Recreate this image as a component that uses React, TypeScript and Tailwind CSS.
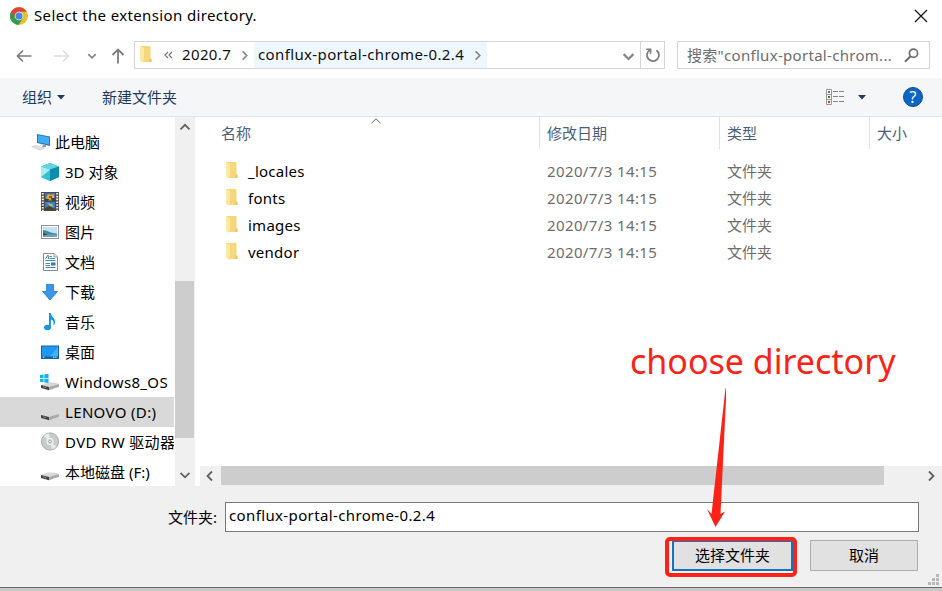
import type { ReactNode } from 'react';

type Place = { label: string; icon: ReactNode; root?: boolean; selected?: boolean; latin?: boolean };

function ChromeLogo() {
  return (
    <svg width="18" height="18" viewBox="0 0 18 18">
      <circle cx="9" cy="9" r="9" fill="#e9c02c" />
      <path d="M9 9 L1.2 4.5 A9 9 0 0 0 8.5 18 L12.9 11.2Z" fill="#2e9b52" />
      <path d="M9 9 L5.1 11.2 L1.2 4.5 A9 9 0 0 1 16.8 4.8 H9Z" fill="#d8473a" />
      <circle cx="9" cy="9" r="4.3" fill="#e8eef6" />
      <circle cx="9" cy="9" r="3.5" fill="#4a86dc" />
    </svg>
  );
}

function FolderIcon() {
  return (
    <svg width="13" height="18" viewBox="0 0 13 18" className="shrink-0">
      <path d="M1 0H11.5V12L12.5 13V16H4Z" fill="#f7d77c" />
      <path d="M11.5 12.5L12.5 13V16H10V13Z" fill="#f2c75f" />
      <path d="M1 0L5 2V13L3.5 17L1 15Z" fill="#fce9a6" />
    </svg>
  );
}

function Chevron({ d, width = 12, color = '#606060', stroke = 1.8 }: { d: string; width?: number; color?: string; stroke?: number }) {
  return (
    <svg width={width} height={width} viewBox="0 0 12 12" fill="none" stroke={color} strokeWidth={stroke} className="shrink-0">
      <path d={d} />
    </svg>
  );
}

const DOWN = 'M1.5 3.8L6 8.3L10.5 3.8';
const UP = 'M1.5 8.3L6 3.8L10.5 8.3';
const LEFT = 'M8 1.5L3.5 6L8 10.5';
const RIGHT = 'M4 1.5L8.5 6L4 10.5';

function Drive({ windows = false }: { windows?: boolean }) {
  return (
    <svg width="20" height="20" viewBox="0 0 20 20">
      <path d="M1 13L8 10.5H14L19 12L9 15.5Z" fill="#d8d8d8" />
      <path d="M1 13L9 15V18.3L1 16Z" fill="#444" />
      <path d="M9 15L19 12V14.8L9 18.3Z" fill="#aaa" />
      <path d="M3 14.8L6 15.6" stroke="#8a8a8a" />
      {windows && (
        <path d="M0 3L3.5 2.5V6H0ZM4.3 2.4L8.5 1.8V6H4.3ZM0 6.8H3.5V10.3L0 9.8ZM4.3 6.8H8.5V11L4.3 10.4Z" fill="#12b2e6" />
      )}
    </svg>
  );
}

const places: Place[] = [
  {
    label: '此电脑',
    root: true,
    icon: (
      <svg width="20" height="20" viewBox="0 0 20 20">
        <path d="M6 2L19 4.5V14L6 11Z" fill="#1c7fc4" />
        <path d="M7 3.2L18 5.3V12.6L7 10.1Z" fill="#42aef0" />
        <path d="M12 12.5L15 13.2V15L11 15.5Z" fill="#9a9a9a" />
        <path d="M0 14.5L5 13L14 16.5L9 18.5Z" fill="#c9cdd0" />
        <path d="M2 14.6L11 17.6M4 13.9L12.5 17" stroke="#f1f1f1" strokeWidth=".7" />
      </svg>
    ),
  },
  {
    label: '3D 对象',
    icon: (
      <svg width="20" height="20" viewBox="0 0 20 20">
        <path d="M10 1L19 4.5V15L10 19L1 15V4.5Z" fill="#18a8c4" />
        <path d="M1 4.5L10 1L19 4.5L10 7.5Z" fill="#62d3e2" />
        <path d="M1 4.5L10 7.5V19L1 15Z" fill="#a9ecf2" />
        <path d="M1 15L10 8V19Z" fill="#39bfd2" />
        <path d="M10 7.5L19 4.5V15L10 19Z" fill="#0d8dac" />
      </svg>
    ),
  },
  {
    label: '视频',
    icon: (
      <svg width="20" height="20" viewBox="0 0 20 20">
        <rect x="1" y="0" width="18" height="19" fill="#4a4a4a" />
        <path d="M2.8 1V19M17.2 1V19" stroke="#f1f1f1" strokeWidth="2" strokeDasharray="1.6 1.2" />
        <rect x="5" y="1" width="10" height="8" fill="#4f6fb0" />
        <rect x="5" y="10" width="10" height="8" fill="#3e7bd0" />
        <path d="M6 6L8 2L11 3L14 2V6L10 8Z" fill="#d9b238" />
        <path d="M5 7H9L8 9H5ZM11 6H15V9H12ZM5 16L9 14L15 17V18H5Z" fill="#4a4425" />
        <path d="M7 11L12 12L14 15L10 14Z" fill="#b9bc62" />
        <path d="M9 4H12V6H9Z" fill="#b84630" />
      </svg>
    ),
  },
  {
    label: '图片',
    icon: (
      <svg width="20" height="20" viewBox="0 0 20 20">
        <rect x="1.5" y="3.5" width="17" height="13" fill="#fff" stroke="#8e979e" />
        <rect x="3" y="5" width="14" height="10" fill="#c4e2f7" />
        <path d="M3 8C7 8 9 11 17 11.5V13H3Z" fill="#4b8b8e" />
        <path d="M3 12.5H17V15H3Z" fill="#6fa0cc" />
        <path d="M3 11L8 12.5L3 13.5Z" fill="#294f58" />
      </svg>
    ),
  },
  {
    label: '文档',
    icon: (
      <svg width="20" height="20" viewBox="0 0 20 20">
        <path d="M3.5 1.5H14L17.5 5V18.5H3.5Z" fill="#fff" stroke="#858d91" />
        <path d="M14 1.5V5H17.5" fill="#e4e8ea" stroke="#858d91" strokeWidth=".8" />
        <path d="M5.5 7L8 3L8.7 7M9.5 4.5H12M9.5 6.5H15M5.5 8.5H15.5M5.5 13.5H10M5.5 15.5H15.5" stroke="#4089b8" fill="none" />
        <path d="M5.5 11.5H10" stroke="#4089b8" />
        <rect x="11" y="10.5" width="4.5" height="3" fill="#487894" />
      </svg>
    ),
  },
  {
    label: '下载',
    icon: (
      <svg width="20" height="20" viewBox="0 0 20 20">
        <path d="M6.5 2.5H13.5V9.5H17.5L10 18L2.5 9.5H6.5Z" fill="#3a97ea" stroke="#1e77c4" strokeWidth=".8" />
      </svg>
    ),
  },
  {
    label: '音乐',
    icon: (
      <svg width="20" height="20" viewBox="0 0 20 20" fill="#1495e6">
        <ellipse cx="7.5" cy="15.5" rx="3.4" ry="2.7" />
        <path d="M9 1H10.8C11 5 15.4 5.5 15 10.5C14.8 12 14 13 13.2 13.6C14.4 9.8 12.8 8 10.9 7.6V15.5H9Z" />
      </svg>
    ),
  },
  {
    label: '桌面',
    icon: (
      <svg width="20" height="20" viewBox="0 0 20 20">
        <rect x="1.5" y="4" width="17" height="12.5" fill="#1e98f2" stroke="#11669f" />
        <path d="M10 14.5L18 5V14.5Z" fill="#45b0fa" />
        <path d="M2 15.2H18" stroke="#0f5f9e" strokeWidth="1.4" />
        <path d="M3 15.2H4.5M13 15.2H17" stroke="#fff" strokeWidth=".9" strokeDasharray="1.4 .8" />
      </svg>
    ),
  },
  { label: 'Windows8_OS', icon: <Drive windows />, latin: true },
  { label: 'LENOVO (D:)', icon: <Drive />, selected: true, latin: true },
  {
    label: 'DVD RW 驱动器',
    latin: true,
    icon: (
      <svg width="20" height="20" viewBox="0 0 20 20">
        <circle cx="10" cy="9.5" r="8.6" fill="#c8cccc" stroke="#9c9c9c" strokeWidth=".8" />
        <path d="M10 9.5L3.8 4A8.3 8.3 0 0 1 9 1.3ZM10 9.5L16.5 14.5A8.3 8.3 0 0 1 12 17.4Z" fill="#e9ebeb" />
        <circle cx="10" cy="9.5" r="3.2" fill="#dcdfdf" stroke="#f7f7f7" />
        <circle cx="10" cy="9.5" r="1.3" fill="#fff" stroke="#8f9494" strokeWidth=".8" />
      </svg>
    ),
  },
  { label: '本地磁盘 (F:)', icon: <Drive /> },
];

const folders = ['_locales', 'fonts', 'images', 'vendor'];

function TitleBar() {
  return (
    <div className="flex h-[31px] items-center pl-[10px] pr-[14px]">
      <ChromeLogo />
      <span className="ml-[6px] text-[15px] tracking-[0.37px] text-black">Select the extension directory.</span>
      <svg width="14" height="14" viewBox="0 0 14 14" stroke="#111" strokeWidth="1.2" className="ml-auto">
        <path d="M1 1L13 13M13 1L1 13" />
      </svg>
    </div>
  );
}

function AddressBar() {
  return (
    <div className="flex h-[47px] items-start pt-[10px]">
      <div className="flex h-[29px] w-[134px] shrink-0 items-center pl-[16px]">
        <svg width="16" height="14" viewBox="0 0 16 14" fill="none" stroke="#7c7c7c" strokeWidth="1.7">
          <path d="M15.5 7H1.5M7 1.5L1.5 7L7 12.5" />
        </svg>
        <svg width="16" height="14" viewBox="0 0 16 14" fill="none" stroke="#dedede" strokeWidth="1.6" className="ml-[22px]">
          <path d="M0 7H14M9 1.5L14.5 7L9 12.5" />
        </svg>
        <span className="ml-[17px]">
          <Chevron d={DOWN} width={10} color="#858585" stroke={2} />
        </span>
        <svg width="14" height="16" viewBox="0 0 14 16" fill="none" stroke="#7c7c7c" strokeWidth="1.8" className="ml-[14px]">
          <path d="M7 15.5V1.5M1.5 7L7 1.5L12.5 7" />
        </svg>
      </div>
      <div className="flex h-[28px] w-[531px] shrink-0 items-center border border-[#d5d5d5] pl-[4px]">
        <FolderIcon />
        <svg width="9" height="8" viewBox="0 0 9 8" fill="none" stroke="#777" strokeWidth="1.2" className="ml-[12px]">
          <path d="M4 1L1 4L4 7M8 1L5 4L8 7" />
        </svg>
        <span className="ml-[9px] w-[50px] whitespace-nowrap pb-[2px] text-[15px] tracking-[0.37px] text-[#111]">2020.7</span>
        <span className="ml-[7px] w-[15px]">
          <Chevron d={RIGHT} width={11} color="#858585" />
        </span>
        <div className="flex h-full w-[233px] items-center bg-[#eff7fe] pl-[4px]">
          <span className="w-[208px] whitespace-nowrap pb-[2px] text-[15px] tracking-[0.37px] text-[#111]">conflux-portal-chrome-0.2.4</span>
          <span className="ml-[6px]">
            <Chevron d={RIGHT} width={11} color="#858585" />
          </span>
        </div>
        <span className="ml-auto mr-[5px] mt-[2px]">
          <Chevron d={DOWN} width={13} color="#858585" stroke={2} />
        </span>
        <div className="flex h-full w-[24px] items-center justify-center border-l border-[#d5d5d5]">
          <svg width="16" height="16" viewBox="0 0 16 16" fill="none" stroke="#7c7c7c" strokeWidth="1.8">
            <path d="M11.4 3.2A6 6 0 1 1 4.8 3" />
            <path d="M1.2 2.2H5.6V6.8" strokeWidth="1.6" />
          </svg>
        </div>
      </div>
      <div className="ml-[12px] flex h-[28px] w-[253px] items-center justify-between border border-[#d5d5d5] pl-[9px] pr-[10px]">
        <span className="whitespace-nowrap text-[15px] tracking-[0.3px] text-[#6d6d6d]">搜索"conflux-portal-chrom...</span>
        <svg width="15" height="15" viewBox="0 0 15 15" fill="none" stroke="#707070">
          <circle cx="9.5" cy="5.2" r="4.1" strokeWidth="1.7" />
          <path d="M6.5 8.3L1 13.8" strokeWidth="2.2" />
        </svg>
      </div>
    </div>
  );
}

function Toolbar() {
  return (
    <div className="flex h-[39px] items-center border-b border-[#e3e5e8] bg-[#f4f6f8] pl-[22px] pr-[19px] text-[15px] text-[#1e3a5f]">
      <span>组织</span>
      <svg width="8" height="5" viewBox="0 0 8 5" className="ml-[5px]">
        <path d="M0 0H8L4 4.5Z" fill="#1e3a5f" />
      </svg>
      <span className="ml-[37px]">新建文件夹</span>
      <svg width="18" height="16" viewBox="0 0 18 16" fill="none" className="ml-auto">
        <path d="M.5 .5H5.5V15.5H.5ZM.5 5.5H5.5M.5 10.5H5.5" stroke="#999" />
        <path d="M7 2.5H12M13 2.5H18M7 7.5H12M13 7.5H18M7 12.5H12M13 12.5H18" stroke="#858585" />
        <path d="M2 2H4V4H2Z" fill="#477ba4" />
        <path d="M2 7H4V9H2Z" fill="#44733d" />
        <path d="M2 12H4V14H2Z" fill="#b3422c" />
      </svg>
      <svg width="8" height="5" viewBox="0 0 8 5" className="ml-[14px]">
        <path d="M0 0H8L4 4.5Z" fill="#1e3a5f" />
      </svg>
      <span className="ml-[37px] flex size-[20px] items-center justify-center rounded-full border border-[#084f9b] bg-[#0b66c3] text-[16px] leading-none text-white">?</span>
    </div>
  );
}

function Sidebar() {
  return (
    <div className="flex w-[200px] shrink-0">
      <div className="w-[174px] overflow-hidden pt-[10px]">
        {places.map((p) => (
          <div
            key={p.label}
            className={`flex h-[30px] items-center whitespace-nowrap text-[15px] text-black ${p.root ? 'gap-[4px] pl-[31px]' : 'gap-[5px] pl-[40px]'} ${p.selected ? 'bg-[#d9d9d9]' : ''} ${p.latin ? 'tracking-[0.34px]' : ''}`}
          >
            <span className="shrink-0">{p.icon}</span>
            <span>{p.label}</span>
          </div>
        ))}
      </div>
      <div className="ml-px flex w-[20px] flex-col items-center bg-[#f0f0f0]">
        <div className="flex h-[20px] items-center">
          <Chevron d={UP} />
        </div>
        <div className="mt-[144px] h-[157px] w-[19px] self-start bg-[#cdcdcd]" />
        <div className="mt-auto flex h-[22px] items-center">
          <Chevron d={DOWN} />
        </div>
      </div>
    </div>
  );
}

function FileList() {
  return (
    <div className="flex min-w-0 flex-1 flex-col">
      <div className="relative flex h-[32px] text-[15px] text-[#4c607a]">
        <div className="flex w-[339px] items-center pl-[21px]">名称</div>
        <div className="flex w-[180px] items-center border-l border-[#e2e2e2] pl-[7px]">修改日期</div>
        <div className="flex w-[150px] items-center border-l border-[#e2e2e2] pl-[7px]">类型</div>
        <div className="flex flex-1 items-center border-l border-[#e2e2e2] pl-[7px]">大小</div>
        <svg width="10" height="6" viewBox="0 0 10 6" fill="none" stroke="#666" className="absolute left-[171px] top-px">
          <path d="M.5 5.2L5 .8L9.5 5.2" />
        </svg>
      </div>
      <div className="pt-[9px]">
        {folders.map((name) => (
          <div key={name} className="flex h-[27px] items-center pl-[25px] text-[15px] text-[#6d6d6d]">
            <span className="-mt-px">
              <FolderIcon />
            </span>
            <span className="ml-[10px] w-[299px] tracking-[0.25px] text-black">{name}</span>
            <span className="w-[180px] tracking-[0.38px]">2020/7/3 14:15</span>
            <span>文件夹</span>
          </div>
        ))}
      </div>
      <div className="mt-auto flex h-[20px] items-center bg-[#f0f0f0]">
        <div className="flex w-[21px] justify-center pr-[2px]">
          <Chevron d={LEFT} />
        </div>
        <div className="h-[19px] w-[663px] self-start bg-[#cdcdcd]" />
        <div className="ml-auto mr-[5px]">
          <Chevron d={RIGHT} />
        </div>
      </div>
    </div>
  );
}

function Footer() {
  return (
    <div className="flex h-[102px] flex-col border-b border-[#6a6a6a] bg-[#f0f0f0] pt-[16px] text-[15px] text-black">
      <div className="flex h-[30px] items-center">
        <span className="w-[225px] pr-[8px] text-right">文件夹:</span>
        <div className="flex h-[30px] w-[694px] items-center border border-[#7a7a7a] bg-white pb-[3px] pl-[3px] tracking-[0.37px]">conflux-portal-chrome-0.2.4</div>
      </div>
      <div className="mt-[8px] flex pl-[672px]">
        <button className="h-[31px] w-[121px] border-2 border-[#1273c4] bg-[#e1e1e1]">选择文件夹</button>
        <button className="ml-[17px] h-[31px] w-[108px] border border-[#adadad] bg-[#e1e1e1]">取消</button>
      </div>
    </div>
  );
}

// Red marks drawn over the dialog: caption, arrow and frame round the confirm button
function Annotation() {
  return (
    <>
      <span className="absolute left-[630px] top-[337px] whitespace-nowrap text-[34px] leading-[48px] text-[#fb2318]">choose directory</span>
      <svg width="20" height="142" viewBox="0 0 20 142" className="absolute left-[706px] top-[387px]">
        <path d="M19.5 1L20.5 2L14.5 127L19 124.5L9.5 140L1 122L5.5 127Z" fill="#fb2318" />
      </svg>
      <div className="absolute left-[665px] top-[537px] h-[40px] w-[132px] rounded-[5px] border-4 border-[#fb2318]" />
      <svg width="12" height="12" viewBox="0 0 12 12" fill="#b8b8b8" className="absolute left-[928px] top-[574px]">
        <path d="M8 0H11V3H8ZM4 4H7V7H4ZM8 4H11V7H8ZM0 8H3V11H0ZM4 8H7V11H4ZM8 8H11V11H8Z" />
      </svg>
    </>
  );
}

export default function App() {
  return (
    <div className="relative flex h-[591px] w-[942px] flex-col overflow-hidden bg-[#c9c9c9] font-['Noto_Sans','Noto_Sans_CJK_SC',sans-serif]">
      <div className="bg-white">
        <TitleBar />
        <AddressBar />
        <Toolbar />
        <div className="flex h-[369px]">
          <Sidebar />
          <FileList />
        </div>
      </div>
      <Footer />
      <Annotation />
    </div>
  );
}
